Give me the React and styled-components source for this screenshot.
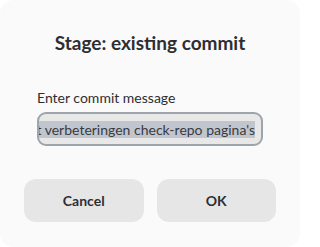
import React from "react";
import styled, { createGlobalStyle } from "styled-components";

const GlobalStyle = createGlobalStyle`
  html, body {
    margin: 0;
    padding: 0;
    background: #ffffff;
    overflow: hidden;
  }
  body {
    font-family: Lato, "Noto Sans", sans-serif;
    color: #2e2e32;
    -webkit-font-smoothing: antialiased;
  }
`;

const Dialog = styled.div`
  width: 300px;
  height: 247px;
  box-sizing: border-box;
  background: #fafafa;
  border-radius: 14px;
  display: flex;
  flex-direction: column;
  padding: 0 24px 25px;
`;

const Title = styled.h2`
  margin: 0;
  padding-top: 31px;
  height: 58px;
  box-sizing: border-box;
  text-align: center;
  font-size: 19px;
  font-weight: 700;
  line-height: 24px;
  color: #2e2e32;
`;

const Field = styled.div`
  display: flex;
  flex-direction: column;
  gap: 5px;
  padding: 0 13px;
  margin-top: 31px;
`;

const Label = styled.label`
  font-size: 14px;
  line-height: 18px;
  color: #2e2e32;
`;

const Entry = styled.div`
  height: 34px;
  box-sizing: border-box;
  border: 2px solid #9da4ac;
  border-radius: 9px;
  background: #e8e8e9;
  display: flex;
  align-items: center;
  padding: 0 6px 0 0;
`;

const Viewport = styled.div`
  flex: 1;
  overflow: hidden;
  display: flex;
  justify-content: flex-end;
  white-space: nowrap;
`;

const Selected = styled.span`
  font-size: 14px;
  line-height: 17px;
  background: #c1c6ce;
  color: #3a3a3e;
`;

const Actions = styled.div`
  margin-top: auto;
  display: grid;
  grid-template-columns: 1fr 1fr;
  gap: 13px;
`;

const Button = styled.button`
  height: 43px;
  border: none;
  border-radius: 12px;
  background: #e6e6e7;
  font-family: inherit;
  font-size: 14px;
  font-weight: 700;
  color: #2e2e32;
  cursor: pointer;
`;

export default function App() {
  return (
    <>
      <GlobalStyle />
      <Dialog>
        <Title>Stage: existing commit</Title>
        <Field>
          <Label>Enter commit message</Label>
          <Entry>
            <Viewport>
              <Selected>Lay-out verbeteringen check-repo pagina's</Selected>
            </Viewport>
          </Entry>
        </Field>
        <Actions>
          <Button>Cancel</Button>
          <Button>OK</Button>
        </Actions>
      </Dialog>
    </>
  );
}
